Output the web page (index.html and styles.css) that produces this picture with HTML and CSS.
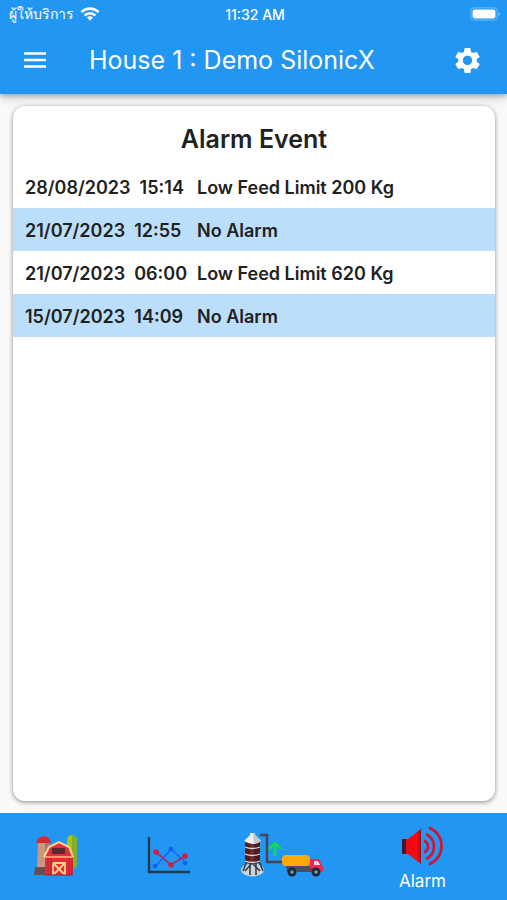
FILE: index.html
```html
<!DOCTYPE html>
<html lang="en">
<head>
<meta charset="utf-8">
<meta name="viewport" content="width=device-width, initial-scale=1">
<title>House 1 : Demo SilonicX</title>
<link rel="stylesheet" href="styles.css">
</head>
<body>
<header class="top">
  <div class="status">
    <div class="carrier">
      <span lang="th">ผู้ให้บริการ</span>
      <svg width="20" height="14" viewBox="0 0 20 14" fill="none" stroke="#fff" stroke-width="2.6" aria-hidden="true">
        <path d="M1.5 5.2a12 12 0 0 1 17 0M4.7 8.5a7.5 7.5 0 0 1 10.6 0"/>
        <path d="M10 13.7 7 10.6a4.2 4.2 0 0 1 6 0Z" fill="#fff" stroke="none"/>
      </svg>
    </div>
    <span class="clock">11:32 AM</span>
    <svg class="battery" width="31" height="14" viewBox="0 0 31 14" aria-hidden="true">
      <rect x=".8" y=".8" width="26.4" height="12.4" rx="3.6" fill="none" stroke="#fff" stroke-opacity=".3" stroke-width="1.2"/>
      <rect x="2.6" y="2.6" width="22.8" height="8.8" rx="2" fill="#fff"/>
      <path d="M28.6 5v4q1.6-.6 1.6-2t-1.6-2Z" fill="#fff" fill-opacity=".4"/>
    </svg>
  </div>
  <div class="bar">
    <button class="icon-button" type="button" aria-label="Menu">
      <svg width="24" height="18" viewBox="0 0 24 18" aria-hidden="true"><path d="M1 2.500h22M1 9h22M1 15.500h22" stroke="#fff" stroke-width="2.400"/></svg>
    </button>
    <h1 class="title">House 1 : Demo SilonicX</h1>
    <button class="icon-button" type="button" aria-label="Settings">
      <svg width="31" height="31" viewBox="0 0 24 24" fill="#fff" aria-hidden="true"><path d="M19.14 12.94c.04-.3.06-.61.06-.94 0-.32-.02-.64-.07-.94l2.03-1.58c.18-.14.23-.41.12-.61l-1.92-3.32c-.12-.22-.37-.29-.59-.22l-2.39.96c-.5-.38-1.03-.7-1.62-.94l-.36-2.54c-.04-.24-.24-.41-.48-.41h-3.84c-.24 0-.43.17-.47.41l-.36 2.54c-.59.24-1.13.57-1.62.94l-2.39-.96c-.22-.08-.47 0-.59.22L2.74 8.87c-.12.21-.08.47.12.61l2.03 1.58c-.05.3-.09.63-.09.94s.02.64.07.94l-2.03 1.58c-.18.14-.23.41-.12.61l1.92 3.32c.12.22.37.29.59.22l2.39-.96c.5.38 1.03.7 1.62.94l.36 2.54c.05.24.24.41.48.41h3.84c.24 0 .44-.17.47-.41l.36-2.54c.59-.24 1.13-.56 1.62-.94l2.39.96c.22.08.47 0 .59-.22l1.92-3.32c.12-.22.07-.47-.12-.61l-2.01-1.58zM12 15.6c-1.98 0-3.6-1.62-3.6-3.6s1.62-3.6 3.6-3.6 3.6 1.62 3.6 3.6-1.62 3.6-3.6 3.6z"/></svg>
    </button>
  </div>
</header>
<main class="card">
  <h2 class="heading">Alarm Event</h2>
  <table class="events">
    <tbody>
      <tr><td class="when">28/08/2023&nbsp; 15:14</td><td>Low Feed Limit 200 Kg</td></tr>
      <tr><td class="when">21/07/2023&nbsp; 12:55</td><td>No Alarm</td></tr>
      <tr><td class="when">21/07/2023&nbsp; 06:00</td><td>Low Feed Limit 620 Kg</td></tr>
      <tr><td class="when">15/07/2023&nbsp; 14:09</td><td>No Alarm</td></tr>
    </tbody>
  </table>
</main>
<nav class="tabs">
  <a class="tab" href="#house" aria-label="House">
    <svg width="44" height="42" viewBox="0 0 44 42" aria-hidden="true">
      <path d="M38 26h2v15h-2z" fill="#7a9a20"/>
      <rect x="33" y="1" width="10" height="34" rx="5" fill="#a4c61c"/>
      <path d="M38 1a5 5 0 0 1 5 5v24a5 5 0 0 1-5 5z" fill="#83ae28"/>
      <path d="M4 9h11v24H3z" fill="#c79a80"/><path d="M11 9h5v24h-5z" fill="#a87968"/>
      <path d="M2 9q1-6 8-7 6 1 7 7z" fill="#dc2638"/>
      <path d="M1 33h12v8H0z" fill="#704b4c"/>
      <path d="M11 22 15 13 25 8l10 5 4 9v19H11z" fill="#e62d3e"/>
      <path d="M14 24v17M17 24v17M35 24v17M38 24v17" stroke="#b91e32"/>
      <path d="M10 23 15 13 25 8l10 5 4 10" fill="none" stroke="#ffd38d" stroke-width="2"/>
      <path d="M11 23h28" stroke="#ffc478" stroke-width="1.4"/>
      <path d="M18 14h13v6H18z" fill="#5b292e"/>
      <path d="M19 29h12v12M19 29v12M20 30l10 10M30 30 20 40" fill="none" stroke="#ffd080" stroke-width="1.8"/>
      <path d="M11 41h28" stroke="#8b2635"/>
    </svg>
  </a>
  <a class="tab" href="#chart" aria-label="Chart">
    <svg width="44" height="42" viewBox="0 0 44 42" aria-hidden="true">
      <path d="M2 3v35h41" fill="none" stroke="#24394a" stroke-width="2.4"/>
      <path d="m9 32 15-17 14 13" fill="none" stroke="#1266ed" stroke-width="1.5"/>
      <path d="m9 18 15 13 14-9" fill="none" stroke="#a52d65" stroke-width="1.8"/>
      <g fill="#0b60ec"><circle cx="8" cy="32" r="2.3"/><circle cx="24" cy="15" r="2.3"/><circle cx="38" cy="29" r="2.3"/></g>
      <g fill="#d41e3d"><circle cx="9" cy="18" r="2.7"/><circle cx="24" cy="31" r="2.7"/><circle cx="38" cy="22" r="2.7"/></g>
    </svg>
  </a>
  <a class="tab" href="#feed" aria-label="Feed delivery">
    <svg width="84" height="46" viewBox="0 0 84 46" aria-hidden="true">
      <ellipse cx="12.500" cy="38" rx="11.500" ry="6.500" fill="#c9d2da"/>
      <path d="M7 29 3 39M10 30v13M16 30v13M19 29l4 10M5 39l7-8 8 8" stroke="#34363c" stroke-width="1.500" fill="none"/>
      <path d="M5 9h15v21q-7 4-15 0z" fill="#501d1c"/>
      <path d="M10 10h4v21h-4z" fill="#6d2c28"/>
      <path d="M5 15q7 3 15 0M5 22q7 3 15 0M5 29q7 3 15 0" stroke="#d8d9dc" stroke-width="1.300" fill="none"/>
      <path d="M4 9 10 3V1h5v2l6 6q-8 6-17 0z" fill="#edf0f2"/>
      <path d="M13 1h2v2l6 6q-3 3-7 3z" fill="#c1c9d1"/>
      <path d="M20 3h7v27h16" fill="none" stroke="#454454" stroke-width="2.400"/>
      <path d="M35 24V11M29 17l6-6 6 6" fill="none" stroke="#12dc4c" stroke-width="2.600"/>
      <path d="M46 34h29v6H47z" fill="#46515d"/>
      <rect x="42" y="23" width="28" height="11" rx="4" fill="#ffa90a"/>
      <path d="M70 27h8q2 0 3 4l2 4v5H70z" fill="#e62958"/>
      <path d="M74 29h4l2 4h-6z" fill="#f7d7e4"/>
      <path d="M69 36h6v4h-6z" fill="#a82347"/>
      <g fill="#1b2b3a"><circle cx="52" cy="40" r="4.500"/><circle cx="76" cy="40" r="4.500"/></g>
      <g fill="#8799a8"><circle cx="52" cy="40" r="1.700"/><circle cx="76" cy="40" r="1.700"/></g>
    </svg>
  </a>
  <a class="tab tab-active" href="#alarm" aria-current="page">
    <svg width="44" height="40" viewBox="0 0 44 40" aria-hidden="true">
      <defs><linearGradient id="cone"><stop offset="0" stop-color="#e40c18"/><stop offset=".75" stop-color="#ff0808"/><stop offset="1" stop-color="#8c1024"/></linearGradient></defs>
      <path d="M2 13h5v15H2z" fill="#401a32"/>
      <path d="M6 13h2L21 3v35L8 28H6z" fill="url(#cone)"/>
      <path d="M24 14.500q4 2 4 6t-4 6M26 8q8 4 8 12.500T26 33M29 1.500q12.500 6 12.500 18.500T29 38.500" fill="none" stroke="#d8122a" stroke-width="2.600"/>
    </svg>
    <span>Alarm</span>
  </a>
</nav>
</body>
</html>
```
FILE: styles.css
```css
* { box-sizing: border-box; }

body {
  margin: 0;
  min-height: 100vh;
  display: flex;
  flex-direction: column;
  background: #fafafa;
  color: #212121;
  font-family: Inter, "Noto Sans", sans-serif;
  font-optical-sizing: none;
}

.top {
  background: #2196f3;
  color: #fff;
  box-shadow: 0 2px 5px rgba(0, 0, 0, .28), 0 5px 12px rgba(0, 0, 0, .12);
}

.status {
  display: grid;
  grid-template-columns: 1fr auto 1fr;
  align-items: center;
  height: 28px;
  padding: 0 6px 0 9px;
  font-size: 14px;
}

.carrier { display: flex; align-items: center; gap: 6px; }
.clock { font-weight: 500; }
.battery { justify-self: end; }

.bar {
  display: flex;
  align-items: center;
  height: 66px;
  padding: 0 20px 2px 15px;
}

.icon-button {
  display: grid;
  place-items: center;
  width: 40px;
  height: 40px;
  padding: 0;
  border: 0;
  background: none;
}

.title {
  flex: 1;
  margin: 0 0 0 34px;
  font-size: 25px;
  line-height: 32px;
  font-weight: 400;
  white-space: nowrap;
}

.card {
  flex: 1;
  margin: 12px 12px 12px 13px;
  border-radius: 12px;
  background: #fff;
  box-shadow: 0 1px 4px rgba(0, 0, 0, .35), 0 2px 6px rgba(0, 0, 0, .12);
}

.heading {
  margin: 0;
  padding: 17px 0 10px;
  font-size: 25px;
  line-height: 32px;
  font-weight: 600;
  text-align: center;
}

.events {
  width: 100%;
  border-collapse: collapse;
  font-size: 18px;
  font-weight: 600;
}

.events tr { height: 43px; }
.events tr:nth-child(even) { background: #bbdefb; }
.events td { padding: 2px 0 0; white-space: nowrap; }
.events .when { width: 184px; padding-left: 12px; }

.tabs {
  display: grid;
  grid-template-columns: 2fr 2fr 2fr 3fr;
  height: 87px;
  background: #2196f3;
}

.tab {
  display: flex;
  flex-direction: column;
  align-items: center;
  justify-content: center;
  padding-bottom: 4px;
  color: #fff;
  font-size: 17px;
  line-height: 22px;
  text-decoration: none;
}

.tab-active { gap: 4px; padding: 4px 0 0; }
```
